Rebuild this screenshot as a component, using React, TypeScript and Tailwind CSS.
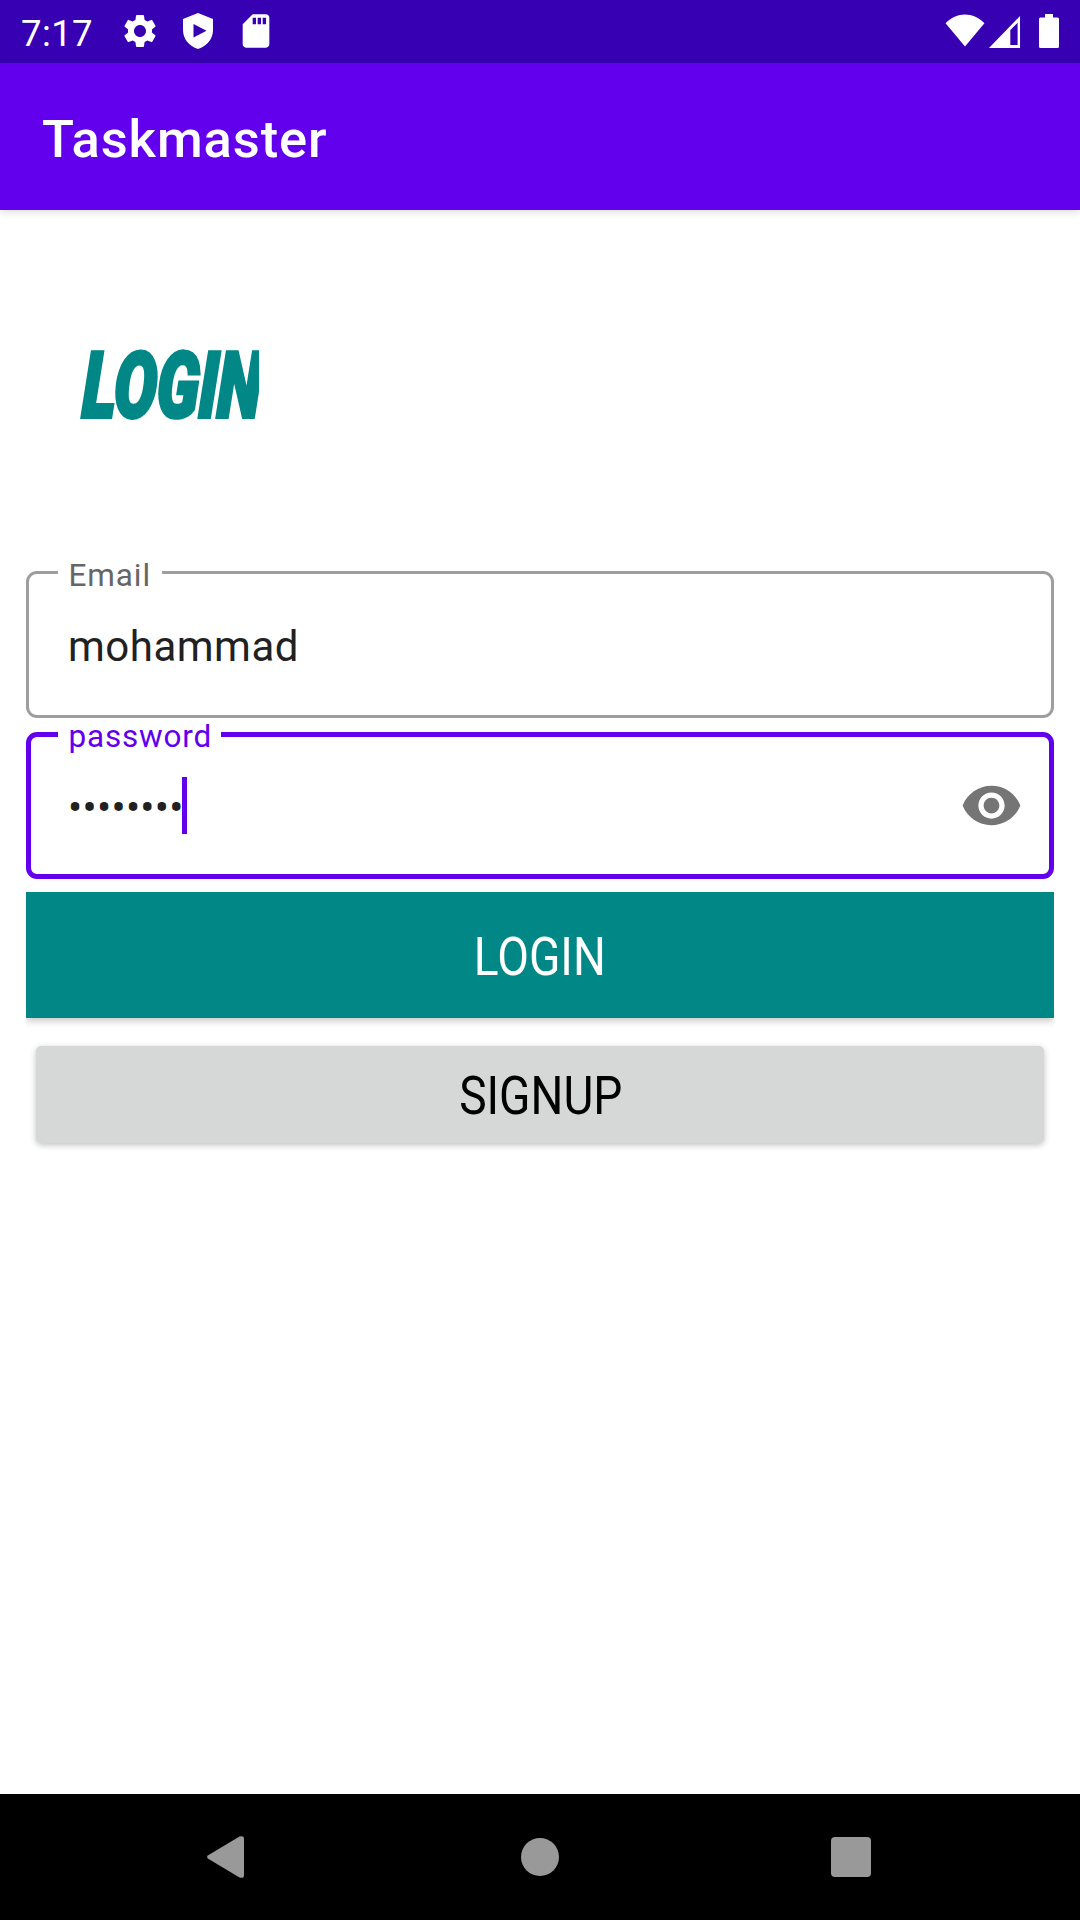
import React from "react";
import { MdSettings, MdSdCard, MdVisibility } from "react-icons/md";

function StatusBar() {
  return (
    <header className="flex h-[63px] items-center justify-between bg-[#3700b3] pb-px text-white">
      <div className="flex items-center">
        <span className="ml-[21px] mt-[5px] w-[99px] text-[36.5px] leading-[60px] tracking-[0.4px]">7:17</span>
        <MdSettings className="size-[40px]" />
        <svg className="ml-[23px] h-[36px] w-[30px]" viewBox="0 0 30 36">
          <path
            fillRule="evenodd"
            d="M15 0 30 6V17C30 26 24 33 15 36 6 33 0 26 0 17V6ZM10.5 11V24.5L23.500 17.750Z"
            fill="currentColor"
          />
        </svg>
        <MdSdCard className="ml-[23px] size-[40px]" />
      </div>
      <div className="flex items-center pr-[21px]">
        <svg className="mb-[2px] h-[33px] w-[40px]" viewBox="0 0 40 34">
          <path d="M0 9.500C11 -2.500 29 -2.500 40 9.500L20 33.500Z" fill="currentColor" />
        </svg>
        <svg className="ml-[3px] h-[33px] w-[33px]" viewBox="0 0 32 34">
          <path fillRule="evenodd" d="M32 1V34H0ZM29.500 8 22 15.500V31H29.500Z" fill="currentColor" />
        </svg>
        <svg className="ml-[18px] h-[34px] w-[20px]" viewBox="0 0 20 34">
          <path
            d="M6 0H14V3.500H18.500Q20 3.500 20 5V32.500Q20 34 18.500 34H1.500Q0 34 0 32.500V5Q0 3.500 1.500 3.500H6Z"
            fill="currentColor"
          />
        </svg>
      </div>
    </header>
  );
}

function NavBar() {
  return (
    <nav className="flex h-[126px] items-center bg-black text-[#999999]">
      <svg className="ml-[207px] h-[42px] w-[37px]" viewBox="0 0 37 42">
        <path
          d="M1.200 19.200 32.500 0.600Q37 -1 37 3V39Q37 43 32.500 41.400L1.200 22.800Q-1 21 1.200 19.200Z"
          fill="currentColor"
        />
      </svg>
      <div className="ml-[277px] size-[38px] rounded-full bg-[#999999]" />
      <div className="ml-[272px] size-[40px] rounded-[4px] bg-[#999999]" />
    </nav>
  );
}

export default function App() {
  return (
    <div className="flex h-[1920px] w-[1080px] flex-col overflow-hidden bg-white font-['Roboto',sans-serif]">
      <StatusBar />
      <div className="z-10 flex h-[147px] items-center bg-[#6200ee] pl-[42px] pt-[4px] shadow-[0_2px_8px_rgba(0,0,0,0.14)]">
        <h1 className="text-[52.5px] font-medium leading-[62px] tracking-[0.9px] text-white">Taskmaster</h1>
      </div>

      <main className="flex flex-1 flex-col px-[26px]">
        <div className="mt-[131px] ml-[52px] flex h-[90px] w-[181px] items-center overflow-hidden">
          <h2 className="origin-left translate-x-[5px] -skew-x-3 scale-x-[0.7] whitespace-nowrap text-[91px] font-black italic leading-[90px] text-[#018786] [-webkit-text-stroke:4px_#018786]">
            LOGIN
          </h2>
        </div>

        <div className="relative mt-[140px] flex h-[147px] items-center rounded-[11px] border-[3px] border-[#9e9e9e] pl-[39px] pt-1">
          <span className="absolute left-[29px] top-[-16px] w-[104px] bg-white pl-[10.5px] text-[31.5px] leading-[36px] tracking-[0.9px] text-[#666666]">
            Email
          </span>
          <span className="text-[42px] leading-[50px] tracking-[0.5px] text-[#212121]">mohammad</span>
        </div>

        <div className="relative mt-[14px] flex h-[147px] items-center rounded-[11px] border-[5px] border-[#6200ee] pl-[37px] pr-[26px]">
          <span className="absolute left-[27px] top-[-18px] w-[163px] bg-white pl-[10.5px] text-[31.5px] leading-[36px] tracking-[0.8px] text-[#6200ee]">
            password
          </span>
          <span className="w-[114px] whitespace-nowrap pt-[4px] text-[42px] leading-[50px] tracking-[0.3px] text-[#212121]">
            ••••••••
          </span>
          <span className="h-[57px] w-[5px] bg-[#6200ee]" />
          <MdVisibility className="ml-auto size-[63px] text-[#757575]" />
        </div>

        <div className="mt-[13px] h-[154px] overflow-hidden">
          <button className="flex h-[126px] w-full items-center justify-center bg-[#018786] pt-[3px] text-[53px] leading-[60px] text-white shadow-[0_3px_7px_rgba(0,0,0,0.22)]">
            <span className="scale-x-[0.87]">LOGIN</span>
          </button>
        </div>
        <button className="mx-[10px] flex h-[97px] items-center justify-center rounded-[5px] bg-[#d6d7d7] pl-[2px] pt-[2px] text-[53px] leading-[60px] text-black shadow-[0_2px_6px_rgba(0,0,0,0.25)]">
          <span className="scale-x-[0.87]">SIGNUP</span>
        </button>
      </main>
      <NavBar />
    </div>
  );
}
